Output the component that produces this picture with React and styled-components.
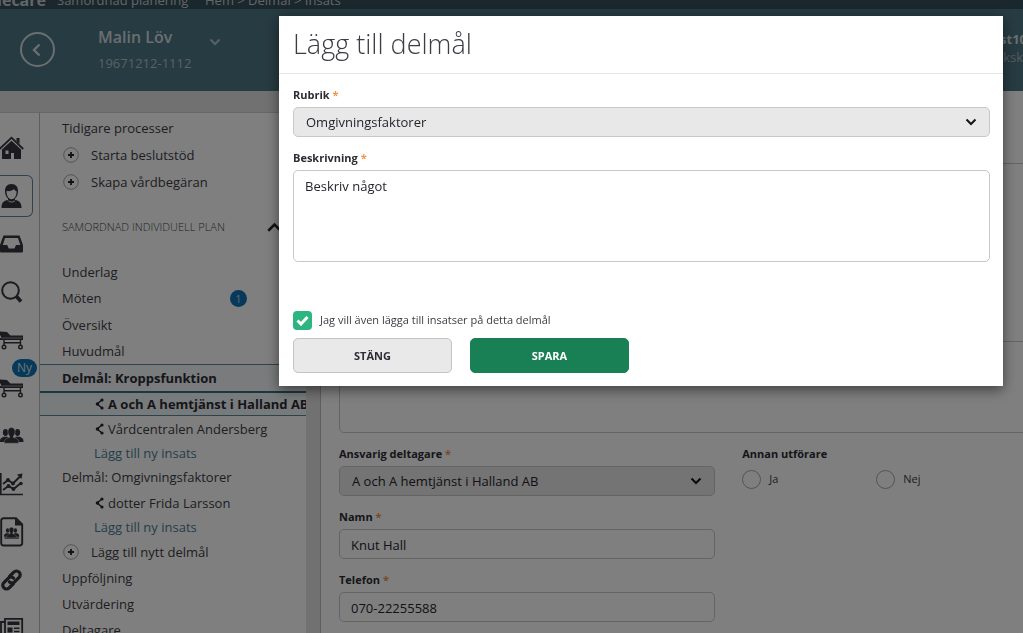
import React from "react";
import styled, { createGlobalStyle, css } from "styled-components";

const GlobalStyle = createGlobalStyle`
  *, *::before, *::after { box-sizing: border-box; }
  body {
    margin: 0;
    background: #fff;
    color: #3c3c44;
    font-family: "Open Sans", "Noto Sans", sans-serif;
    font-size: 13px;
    line-height: 18px;
  }
  button, input, select, textarea { font: inherit; color: inherit; margin: 0; }
  a { color: inherit; text-decoration: none; }
`;

/* ---------- page shell ---------- */

const Page = styled.div`
  display: flex;
  flex-direction: column;
  height: 100vh;
  overflow: hidden;
`;

const TopBar = styled.div`
  display: flex;
  align-items: flex-end;
  flex: none;
  height: 9px;
  overflow: hidden;
  background: #344e58;
  color: #c4cdd1;
  white-space: nowrap;
`;

const Brand = styled.strong`
  width: 46px;
  margin-right: 11px;
  direction: rtl;
  font-size: 16px;
`;

const Product = styled.span`
  width: 148px;
`;

const PatientBar = styled.header`
  display: flex;
  flex: none;
  height: 82px;
  padding-left: 20px;
  background: #4e7684;
  color: #d4dde0;
`;

const BackButton = styled.button`
  display: flex;
  align-items: center;
  justify-content: center;
  width: 35px;
  height: 35px;
  margin: 23px 43px 0 0;
  padding: 0;
  border: 2px solid #d4dde0;
  border-radius: 50%;
  background: none;
`;

const Patient = styled.div`
  width: 111px;
  padding-top: 18px;
`;

const PatientName = styled.div`
  font-size: 16px;
  font-weight: 600;
  line-height: 20px;
`;

const PatientId = styled.div`
  padding-top: 7px;
  color: #b4c2c8;
`;

const PatientMenu = styled.button`
  align-self: flex-start;
  display: flex;
  margin-top: 29px;
  padding: 0;
  border: 0;
  background: none;
`;

const User = styled.div`
  margin-left: auto;
  padding-top: 21px;
  text-align: right;
`;

const UserName = styled.div`
  margin-right: -4px;
  font-weight: 700;
`;

const UserRole = styled.div`
  color: #a8b8be;
`;

const Body = styled.div`
  display: flex;
  flex: 1;
  min-height: 0;
`;

const Left = styled.div`
  display: flex;
  flex: none;
  width: 321px;
  padding-top: 21px;
  background: #e2e2e2;
  border-right: 1px solid #bcbcbc;
`;

const Rail = styled.nav`
  flex: none;
  width: 40px;
  padding-top: 11px;
  overflow: hidden;
  background: #fff;
  border-top: 1px solid #cfcfcf;
  border-right: 1px solid #bcbcbc;
`;

const RailButton = styled.button`
  position: relative;
  display: flex;
  align-items: center;
  width: 33px;
  height: 42px;
  margin: 3px 0 6px;
  padding: 0;
  border: 1px solid transparent;
  border-left: 0;
  border-radius: 0 6px 6px 0;
  background: none;
  color: #34343e;
  ${(p) => p.$active && css`border-color: #5b86a8;`}
`;

const NewBadge = styled.span`
  position: absolute;
  top: -9px;
  left: 12px;
  width: 25px;
  height: 18px;
  border-radius: 9px;
  background: #0f72b4;
  color: #d8e6f0;
  font-size: 12px;
  line-height: 18px;
  text-align: center;
`;

const Sidebar = styled.nav`
  flex: 1;
  min-width: 0;
  margin-right: 14px;
  padding-top: 1px;
  overflow: hidden;
  background: #fff;
  border-top: 1px solid #cfcfcf;
  white-space: nowrap;
`;

const Row = styled.a`
  display: flex;
  align-items: center;
  height: ${(p) => p.$h || 26}px;
  padding-left: ${(p) => p.$indent || 22}px;
  ${(p) => p.$link && css`color: #4a7c96;`}
  ${(p) => p.$open && css`
    background: #f2f6f8;
    border-top: 1px solid #5f8798;
    color: #2c2c34;
    font-weight: 700;
  `}
  ${(p) => p.$current && css`
    background: #f0f6f8;
    border-top: 2px solid #3c6c7c;
    border-bottom: 1px solid #5f8798;
    color: #2c2c34;
    font-weight: 700;
  `}
  svg { flex: none; }
`;

const PlusRow = styled(Row)`
  gap: 12px;
`;

const SubRow = styled(Row)`
  gap: 4px;
`;

const CountRow = styled(Row)`
  justify-content: space-between;
  padding-right: 59px;
`;

const Count = styled.span`
  width: 17px;
  height: 17px;
  border-radius: 50%;
  background: #0f72b4;
  color: #b8d4e8;
  font-size: 11px;
  line-height: 17px;
  text-align: center;
`;

const SectionButton = styled.button`
  display: flex;
  align-items: center;
  justify-content: space-between;
  width: 100%;
  height: 64px;
  padding: 0 24px 0 22px;
  border: 0;
  background: none;
  color: #44444c;
  font-size: 11px;
  font-weight: 300;
`;

const Main = styled.main`
  flex: 1;
  min-width: 0;
  overflow: hidden;
`;

const MainHead = styled.div`
  height: 73px;
  border-bottom: 1px solid #c8c8c8;
`;

const Form = styled.form`
  padding: 177px 0 0 18px;
`;

const WideBox = styled.div`
  margin: 0 -16px 13px 0;
`;

const Columns = styled.div`
  display: grid;
  grid-template-columns: 55% 1fr;
  column-gap: 27px;
`;

/* ---------- form parts ---------- */

const Field = styled.div`
  margin-bottom: 13px;
`;

const fieldTitle = css`
  display: block;
  margin-bottom: 4px;
  padding: 0;
  color: #2c2c34;
  font-size: 11px;
  font-weight: 700;
  line-height: 16px;
`;

const Label = styled.label`
  ${fieldTitle}
`;

const Star = styled.span`
  color: #f0954a;
`;

const control = css`
  display: block;
  width: 100%;
  border: 1px solid #c8c8c8;
  border-radius: 5px;
  background: #fff;
  color: #24242c;
  outline: 0;
`;

const TextInput = styled.input`
  ${control}
  height: 30px;
  padding: 2px 11px 0;
`;

const TextArea = styled.textarea`
  ${control}
  height: 92px;
  padding: 6px 11px;
  resize: none;
`;

const SelectWrap = styled.div`
  position: relative;
  svg {
    position: absolute;
    top: 11px;
    right: 13px;
    pointer-events: none;
  }
`;

const Select = styled.select`
  ${control}
  height: 30px;
  padding: 0 32px 0 12px;
  appearance: none;
  background: #e8e8e8;
`;

const RadioGroup = styled.fieldset`
  min-width: 0;
  margin: 0;
  padding: 0;
  border: 0;
`;

const Legend = styled.legend`
  ${fieldTitle}
  margin-bottom: 8px;
`;

const Options = styled.div`
  display: flex;
`;

const Option = styled.label`
  display: flex;
  gap: 8px;
  width: 134px;
  font-size: 11px;
  line-height: 18px;
`;

const Radio = styled.input`
  width: 19px;
  height: 19px;
  border: 1px solid #a8a8a8;
  border-radius: 50%;
  appearance: none;
`;

/* ---------- dialog ---------- */

const Overlay = styled.div`
  position: fixed;
  inset: 0;
  display: flex;
  align-items: flex-start;
  padding: 16px 20px 0 279px;
  background: rgba(0, 0, 0, 0.5);
`;

const Dialog = styled.section`
  flex: 1;
  min-width: 0;
  background: #fff;
  box-shadow: 0 4px 12px rgba(0, 0, 0, 0.5);
`;

const DialogHead = styled.header`
  padding: 9px 14px 10px;
  border-bottom: 1px solid #e4e6e8;
`;

const DialogTitle = styled.h1`
  margin: 0;
  color: #3c3c44;
  font-size: 27px;
  font-weight: 300;
  line-height: 38px;
`;

const DialogForm = styled.form`
  padding: 13px 13px 13px 14px;
`;

const CheckLine = styled.label`
  display: flex;
  gap: 8px;
  margin: 49px 0 8px;
  font-size: 11px;
  line-height: 18px;
`;

const CheckWrap = styled.span`
  position: relative;
  width: 19px;
  height: 19px;
  svg { position: absolute; top: 4px; left: 3px; pointer-events: none; }
`;

const CheckBox = styled.input`
  display: block;
  width: 19px;
  height: 19px;
  border-radius: 4px;
  background: #2cb580;
  appearance: none;
`;

const Actions = styled.div`
  display: flex;
  gap: 18px;
`;

const Button = styled.button`
  width: 159px;
  height: 35px;
  padding: 0;
  border: 1px solid ${(p) => (p.$primary ? "#188054" : "#c4c4c4")};
  border-radius: 5px;
  background: ${(p) => (p.$primary ? "#188054" : "#e9e9e9")};
  color: ${(p) => (p.$primary ? "#fff" : "#2c2c34")};
  font-size: 11px;
  font-weight: 700;
`;

/* ---------- icons ---------- */

const Chevron = ({ w = 12, h = 8, d = "M1.5 1.5 6 6 10.5 1.5", color = "#14141c", sw = 2 }) => (
  <svg width={w} height={h} viewBox="0 0 12 8" fill="none" stroke={color} strokeWidth={sw} aria-hidden="true">
    <path d={d} />
  </svg>
);

const PlusIcon = () => (
  <svg width="17" height="16" viewBox="0 0 17 16" fill="none" aria-hidden="true">
    <circle cx="9" cy="8" r="7.3" stroke="#a8a8ac" />
    <path d="M9 5v6M6 8h6" stroke="#24242c" strokeWidth="1.8" />
  </svg>
);

const ShareIcon = () => (
  <svg width="9" height="12" viewBox="0 0 9 12" aria-hidden="true">
    <path d="M7 2 2 6l5 4" fill="none" stroke="#24242c" strokeWidth="1.4" />
    <circle cx="7" cy="2" r="1.6" fill="#24242c" />
    <circle cx="2.500" cy="6" r="1.8" fill="#24242c" />
    <circle cx="7" cy="10" r="1.6" fill="#24242c" />
  </svg>
);

const RailIcon = ({ children, h = 24 }) => (
  <svg width="24" height={h} viewBox={`0 0 24 ${h}`} fill="currentColor" aria-hidden="true">{children}</svg>
);

const people = (
  <>
    <ellipse cx="5.5" cy="8.5" rx="2.6" ry="3.4" />
    <ellipse cx="17.5" cy="8.5" rx="2.6" ry="3.4" />
    <path d="M0 18c0-3 .6-4 3.800-5.200h3.600L9 14l-3 4zM23.500 18c0-3-.6-4-3.800-5.200h-3.600L14.500 14l3 4z" />
    <path d="M11.500 3.500c2.400 0 3.600 1.700 3.600 4.200 0 1.900-.7 3.300-1.700 4.300v1.400c3.400 1 5.400 1.800 5.400 5.800H4.200c0-4 2-4.800 5.400-5.800V12c-1-1-1.700-2.400-1.700-4.300 0-2.500 1.200-4.200 3.600-4.200z" stroke="#fff" strokeWidth=".5" />
  </>
);

const bed = (
  <>
    <path d="M0 3.500l7 .4 3.500 3.600H23v4.500H0v-1.900h1V8.500L0 7z" />
    <path d="M1 10h21" stroke="#fff" strokeWidth=".5" />
    <g fill="none" stroke="currentColor" strokeWidth="1.400">
      <path d="M4 12v5M20.500 12v5M4 14.800h16.500" />
      <circle cx="4" cy="19" r="1.800" />
      <circle cx="20.500" cy="19" r="1.800" />
    </g>
  </>
);

const railItems = [
  { label: "Hem", icon: (
    <RailIcon>
      <path d="M16.500 2h3v6l-3-3z" />
      <path d="M-.5 13 11.500 1.700 23.200 13" fill="none" stroke="currentColor" strokeWidth="1.800" />
      <path fillRule="evenodd" d="M11.500 4.800 21 13.500V23h-7v-6h-3v6H2v-9.500zM5.500 14.500v3.500h3v-3.500z" />
    </RailIcon>) },
  { label: "Patient", active: true, icon: (
    <RailIcon h={26}>
      <path d="M11.500 1C7 1 5 4 5 8c0 3.500 1.200 6 3 7.600v1.500C3.500 18 1.500 19.500 1.500 25h20c0-5.500-2-7-6.500-7.900v-1.500c1.800-1.600 3-4.100 3-7.600 0-4-2-7-6.500-7z" />
      <path d="M6.500 8c3 .5 6-.4 7.500-2 .6 1.200 1.500 1.900 2.600 2.200 0 4.600-2 8-5.100 8S6.500 12.500 6.500 8z" fill="#fff" />
      <path d="M8 17.500c1.500 2 5.500 2 7 0" stroke="#fff" fill="none" />
    </RailIcon>) },
  { label: "Inkorg", icon: (
    <RailIcon>
      <path fillRule="evenodd" d="M3.500 3.500h16L23 13v6c0 1-.6 1.500-1.500 1.500h-20C.6 20.500 0 20 0 19v-6zM5 6 2.800 13h4.400l1.500 3.500h5.800L16 13h4.300L18 6z" />
    </RailIcon>) },
  { label: "Sök", icon: (
    <RailIcon>
      <circle cx="10.500" cy="10.500" r="8.300" fill="none" stroke="currentColor" strokeWidth="2" />
      <path d="m16.500 16.500 4.500 5" stroke="currentColor" strokeWidth="3.600" />
    </RailIcon>) },
  { label: "Inskrivna", icon: <RailIcon>{bed}</RailIcon> },
  { label: "Nya inskrivna", badge: true, icon: <RailIcon>{bed}</RailIcon> },
  { label: "Grupper", icon: <RailIcon>{people}</RailIcon> },
  { label: "Statistik", icon: (
    <RailIcon>
      <g fill="none" stroke="currentColor">
        <path d="M.8 1v21.500H23" strokeWidth="1.600" />
        <path d="m3 12 5-4 5 3.500 7-7" strokeWidth="2" />
        <path d="m3 18 5.500-4 5 3 7.500-6" strokeWidth="2" />
      </g>
      <path d="M22.500 1.500 21.500 7 17 2.500z" />
      <circle cx="8" cy="8" r="1.900" /><circle cx="13" cy="11.500" r="1.900" />
      <circle cx="8.500" cy="14" r="1.900" /><circle cx="13.500" cy="17" r="1.900" /><circle cx="21" cy="11.500" r="1.700" />
    </RailIcon>) },
  { label: "Rapport", icon: (
    <RailIcon h={30}>
      <path d="M3.500 1.200H16l6.200 6.300V26c0 1.600-.8 2.500-2.500 2.500H3.500C2 28.500 1.200 27.600 1.200 26V3.700c0-1.600.8-2.500 2.300-2.500z" fill="none" stroke="currentColor" strokeWidth="1.900" />
      <path d="M15 1v7.500h7.500z" />
      <g transform="translate(4 8) scale(.65)">{people}</g>
      <path d="M4.500 21h14.500" stroke="currentColor" strokeWidth="1.200" />
    </RailIcon>) },
  { label: "Länkar", icon: (
    <RailIcon>
      <g fill="none" stroke="currentColor" strokeWidth="3.200" strokeLinecap="round">
        <path d="m9.500 8.500 4.300-4.300c1.600-1.600 3.800-1.600 5.300-.1s1.500 3.700 0 5.200l-4.500 4.500c-1.500 1.500-3.700 1.500-5.200 0" />
        <path d="m13.500 15.500-4.300 4.300c-1.600 1.600-3.800 1.600-5.300.1s-1.500-3.700 0-5.200l4.500-4.500c1.500-1.500 3.700-1.500 5.200 0" />
      </g>
    </RailIcon>) },
  { label: "Nyheter", icon: (
    <RailIcon>
      <path d="M5 2.800h17.200V21H2.500C1.500 21 1 20.300 1 19.500V6h4zM5 3v16" fill="none" stroke="currentColor" strokeWidth="1.800" />
      <path d="M7.500 5.500h12v3.500h-12zM7.500 11.500h5v5h-5z" />
      <path d="M14 12.300h5.500M14 15.500h5.500" stroke="currentColor" strokeWidth="1.400" />
    </RailIcon>) },
];

const Required = () => <Star> *</Star>;

export default function App() {
  return (
    <>
      <GlobalStyle />
      <Page>
        <TopBar>
          <Brand>Tellecare</Brand>
          <Product>Samordnad planering</Product>
          <span>Hem &gt; Delmål &gt; Insats</span>
        </TopBar>

        <PatientBar>
          <BackButton type="button" aria-label="Tillbaka">
            <svg width="12" height="14" viewBox="0 0 12 14" fill="none" stroke="#d4dde0" strokeWidth="2.400" aria-hidden="true">
              <path d="M7.500 1.500 2 7l5.500 5.500" />
            </svg>
          </BackButton>
          <Patient>
            <PatientName>Malin Löv</PatientName>
            <PatientId>19671212-1112</PatientId>
          </Patient>
          <PatientMenu type="button" aria-label="Visa patient">
            <Chevron color="#b4c2c8" />
          </PatientMenu>
          <User>
            <UserName>Test10</UserName>
            <UserRole>Sjuksk</UserRole>
          </User>
        </PatientBar>

        <Body>
          <Left>
            <Rail>
              {railItems.map((item) => (
                <RailButton key={item.label} type="button" aria-label={item.label} $active={item.active}>
                  {item.icon}
                  {item.badge && <NewBadge>Ny</NewBadge>}
                </RailButton>
              ))}
            </Rail>

            <Sidebar>
              <Row href="#" $h={27}>Tidigare processer</Row>
              <PlusRow href="#" $h={27}><PlusIcon />Starta beslutstöd</PlusRow>
              <PlusRow href="#" $h={27}><PlusIcon />Skapa vårdbegäran</PlusRow>
              <SectionButton type="button">
                SAMORDNAD INDIVIDUELL PLAN
                <Chevron w={15} h={10} d="M1 7 6 2l5 5" color="#24242c" />
              </SectionButton>
              <Row href="#">Underlag</Row>
              <CountRow href="#">Möten<Count>1</Count></CountRow>
              <Row href="#" $h={27}>Översikt</Row>
              <Row href="#">Huvudmål</Row>
              <Row href="#" $h={27} $open>Delmål: Kroppsfunktion</Row>
              <SubRow href="#" $h={25} $indent={55} $current><ShareIcon />A och A hemtjänst i Halland AB</SubRow>
              <SubRow href="#" $h={25} $indent={55}><ShareIcon />Vårdcentralen Andersberg</SubRow>
              <Row href="#" $h={23} $indent={54} $link>Lägg till ny insats</Row>
              <Row href="#">Delmål: Omgivningsfaktorer</Row>
              <SubRow href="#" $h={25} $indent={55}><ShareIcon />dotter Frida Larsson</SubRow>
              <Row href="#" $h={23} $indent={54} $link>Lägg till ny insats</Row>
              <PlusRow href="#" $h={27}><PlusIcon />Lägg till nytt delmål</PlusRow>
              <Row href="#">Uppföljning</Row>
              <Row href="#">Utvärdering</Row>
              <Row href="#">Deltagare</Row>
            </Sidebar>
          </Left>

          <Main>
            <MainHead />
            <Form>
              <WideBox>
                <TextArea aria-label="Beskrivning av insats" />
              </WideBox>
              <Columns>
                <div>
                  <Field>
                    <Label htmlFor="ansvarig">Ansvarig deltagare<Required /></Label>
                    <SelectWrap>
                      <Select id="ansvarig"><option>A och A hemtjänst i Halland AB</option></Select>
                      <Chevron />
                    </SelectWrap>
                  </Field>
                  <Field>
                    <Label htmlFor="namn">Namn<Required /></Label>
                    <TextInput id="namn" defaultValue="Knut Hall" />
                  </Field>
                  <Field>
                    <Label htmlFor="telefon">Telefon<Required /></Label>
                    <TextInput id="telefon" type="tel" defaultValue="070-22255588" />
                  </Field>
                </div>
                <RadioGroup>
                  <Legend>Annan utförare</Legend>
                  <Options>
                    <Option><Radio type="radio" name="annan" />Ja</Option>
                    <Option><Radio type="radio" name="annan" />Nej</Option>
                  </Options>
                </RadioGroup>
              </Columns>
            </Form>
          </Main>
        </Body>
      </Page>

      <Overlay>
        <Dialog role="dialog" aria-modal="true" aria-labelledby="dialog-title">
          <DialogHead>
            <DialogTitle id="dialog-title">Lägg till delmål</DialogTitle>
          </DialogHead>
          <DialogForm>
            <Field>
              <Label htmlFor="rubrik">Rubrik<Required /></Label>
              <SelectWrap>
                <Select id="rubrik"><option>Omgivningsfaktorer</option></Select>
                <Chevron />
              </SelectWrap>
            </Field>
            <Label htmlFor="beskrivning">Beskrivning<Required /></Label>
            <TextArea id="beskrivning" defaultValue="Beskriv något" />
            <CheckLine>
              <CheckWrap>
                <CheckBox type="checkbox" defaultChecked />
                <svg width="13" height="11" viewBox="0 0 13 11" fill="none" stroke="#fff" strokeWidth="3" aria-hidden="true">
                  <path d="M1.500 5.500 5 9l6.500-7" />
                </svg>
              </CheckWrap>
              Jag vill även lägga till insatser på detta delmål
            </CheckLine>
            <Actions>
              <Button type="button">STÄNG</Button>
              <Button type="button" $primary>SPARA</Button>
            </Actions>
          </DialogForm>
        </Dialog>
      </Overlay>
    </>
  );
}
